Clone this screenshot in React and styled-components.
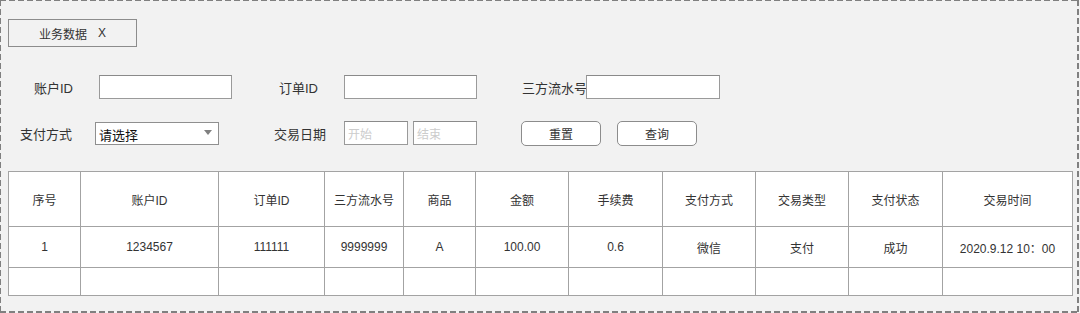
import React from "react";
import styled, { createGlobalStyle } from "styled-components";

const GlobalStyle = createGlobalStyle`
  html, body {
    margin: 0;
    padding: 0;
    background: #f2f2f2;
  }
  body {
    font-family: "Liberation Sans", "Noto Sans CJK SC", sans-serif;
    color: #333333;
  }
  * {
    box-sizing: border-box;
  }
`;

const Frame = styled.div`
  width: 1080px;
  height: 313px;
  padding-top: 19px;
  background-color: #f2f2f2;
  background-image:
    repeating-linear-gradient(to right, #808080 0 6px, transparent 6px 9px),
    repeating-linear-gradient(to right, #808080 0 6px, transparent 6px 9px),
    repeating-linear-gradient(to bottom, #808080 0 6px, transparent 6px 9px),
    repeating-linear-gradient(to bottom, #808080 0 6px, transparent 6px 9px);
  background-size: 100% 1px, 100% 2px, 1px 100%, 2px 100%;
  background-position: 0 0, 0 100%, 0 0, 1077px 0;
  background-repeat: no-repeat;
  overflow: hidden;
`;

const Tab = styled.div`
  margin-left: 8px;
  width: 129px;
  height: 28px;
  border: 1px solid #8c8c8c;
  display: flex;
  align-items: center;
  justify-content: center;
  gap: 11px;
  font-size: 12px;
  color: #333;
`;

const Row = styled.div`
  display: flex;
  align-items: center;
  height: 24px;
  margin-top: ${(p) => p.$mt}px;
`;

const Label = styled.div`
  margin-left: ${(p) => p.$ml}px;
  width: ${(p) => p.$w}px;
  font-size: 13px;
  color: #333;
  white-space: nowrap;
`;

const Input = styled.div`
  margin-left: ${(p) => p.$ml || 0}px;
  width: ${(p) => p.$w}px;
  height: 24px;
  background: #ffffff;
  border: 1px solid #9a9a9a;
  border-top-color: #8a8a8a;
  display: flex;
  align-items: center;
  padding-left: 3px;
  font-size: 12px;
  color: #cccccc;
`;

const Select = styled.div`
  width: 124px;
  height: 23px;
  background: #ffffff;
  border: 1px solid #8f8f8f;
  display: flex;
  align-items: center;
  justify-content: space-between;
  padding: 2px 6px 0 3px;
  font-size: 13px;
  color: #111;
`;

const Caret = styled.span`
  width: 0;
  height: 0;
  border-left: 4px solid transparent;
  border-right: 4px solid transparent;
  border-top: 5px solid #808080;
  margin-top: -3px;
`;

const Button = styled.div`
  margin-left: ${(p) => p.$ml}px;
  width: 80px;
  height: 25px;
  background: #ffffff;
  border: 1px solid #8c8c8c;
  border-radius: 5px;
  display: flex;
  align-items: center;
  justify-content: center;
  font-size: 12px;
  color: #333;
`;

const Table = styled.div`
  margin: 26px 0 0 8px;
  width: 1065px;
  display: grid;
  grid-template-columns: 72px 138px 106px 79px 72px 93px 94px 93px 93px 94px 130px;
  grid-template-rows: 55px 41px 28px;
  border-left: 1px solid #a3a3a3;
  border-top: 1px solid #a3a3a3;
  background: #ffffff;
`;

const Cell = styled.div`
  border-right: 1px solid #a3a3a3;
  border-bottom: 1px solid #a3a3a3;
  display: flex;
  align-items: center;
  justify-content: center;
  font-size: 12px;
  color: #333;
  white-space: nowrap;
`;

const headers = [
  "序号",
  "账户ID",
  "订单ID",
  "三方流水号",
  "商品",
  "金额",
  "手续费",
  "支付方式",
  "交易类型",
  "支付状态",
  "交易时间",
];

const rows = [
  ["1", "1234567", "111111", "9999999", "A", "100.00", "0.6", "微信", "支付", "成功", "2020.9.12 10：00"],
  ["", "", "", "", "", "", "", "", "", "", ""],
];

export default function App() {
  return (
    <>
      <GlobalStyle />
      <Frame>
        <Tab>
          <span>业务数据</span>
          <span>X</span>
        </Tab>

        <Row $mt={28}>
          <Label $ml={34} $w={65}>账户ID</Label>
          <Input $w={133} />
          <Label $ml={47} $w={65}>订单ID</Label>
          <Input $w={133} />
          <Label $ml={45} $w={64}>三方流水号</Label>
          <Input $w={134} />
        </Row>

        <Row $mt={22}>
          <Label $ml={20} $w={75}>支付方式</Label>
          <Select>
            <span>请选择</span>
            <Caret />
          </Select>
          <Label $ml={55} $w={70}>交易日期</Label>
          <Input $w={64}>开始</Input>
          <Input $ml={5} $w={64}>结束</Input>
          <Button $ml={44}>重置</Button>
          <Button $ml={16}>查询</Button>
        </Row>

        <Table>
          {headers.map((h) => (
            <Cell key={h}>{h}</Cell>
          ))}
          {rows.map((r, i) =>
            r.map((v, j) => <Cell key={`${i}-${j}`}>{v}</Cell>)
          )}
        </Table>
      </Frame>
    </>
  );
}
